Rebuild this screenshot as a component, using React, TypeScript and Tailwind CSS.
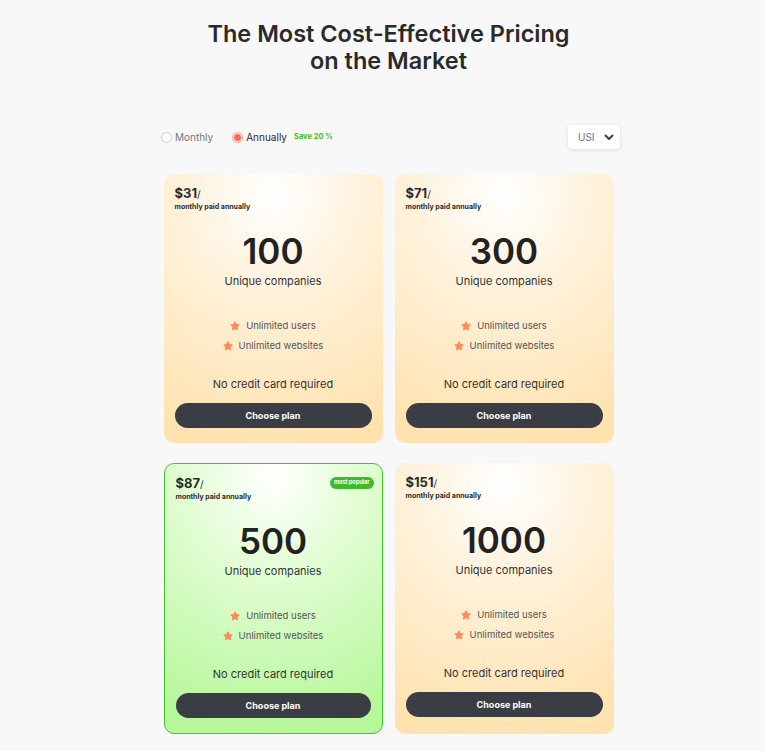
import React from "react";

const Star = () => (
  <svg width="10" height="10" viewBox="0 0 24 24" className="shrink-0">
    <path
      d="M12 2.5l2.9 6.1 6.6.8-4.9 4.6 1.3 6.6L12 17.3l-5.9 3.3 1.3-6.6-4.9-4.6 6.6-.8z"
      fill="#ff8a5b"
      stroke="#ff8a5b"
      strokeWidth="3"
      strokeLinejoin="round"
    />
  </svg>
);

type Plan = { price: string; count: string; popular?: boolean };

const plans: Plan[] = [
  { price: "$31", count: "100" },
  { price: "$71", count: "300" },
  { price: "$87", count: "500", popular: true },
  { price: "$151", count: "1000" },
];

function Card({ p }: { p: Plan }) {
  const bg = p.popular
    ? "bg-[radial-gradient(ellipse_110%_95%_at_50%_5%,#ffffff_0%,#e4fdd6_35%,#b6f79a_100%)] border border-[#45c232]"
    : "bg-[radial-gradient(ellipse_110%_95%_at_50%_8%,#ffffff_0%,#fff1da_40%,#ffe2ae_100%)]";
  return (
    <div className={`relative rounded-[10px] ${bg} flex flex-col px-[11px] pt-[13px] pb-[15px]`}>
      {p.popular && (
        <div className="absolute right-[8px] top-[13px] rounded-full bg-[#3dbb2b] px-[4px] h-[12px] flex items-center text-[5.5px] font-bold text-white leading-none">
          most popular
        </div>
      )}
      <div className="flex items-baseline leading-none">
        <span className="text-[13px] font-bold text-[#2b2b2b]">{p.price}</span>
        <span className="text-[10px] text-[#2b2b2b]">/</span>
      </div>
      <div className="mt-[3px] text-[7px] font-bold text-[#2b2b2b] leading-none">monthly paid annually</div>
      <div className="mt-[24px] text-center text-[35px] font-semibold text-[#222] leading-none">{p.count}</div>
      <div className="mt-[7px] text-center text-[11px] text-[#333] leading-none">Unique companies</div>
      <div className="mt-[34px] flex flex-col items-center gap-[10px] text-[9.5px] text-[#555] leading-none">
        <div className="flex items-center gap-[6px]">
          <Star />
          <span>Unlimited users</span>
        </div>
        <div className="flex items-center gap-[6px]">
          <Star />
          <span>Unlimited websites</span>
        </div>
      </div>
      <div className="mt-[28px] text-center text-[11px] text-[#333] leading-none">No credit card required</div>
      <button className="mt-[13px] h-[25px] shrink-0 w-full rounded-full bg-[#3b3d45] text-white text-[9px] font-bold">
        Choose plan
      </button>
    </div>
  );
}

export default function App() {
  return (
    <div className="min-h-[751px] bg-[#f8f8f8] font-['Inter',sans-serif] flex flex-col items-center pl-[12px]">
      <h1 className="mt-[20px] text-center text-[23.5px] font-semibold leading-[27px] text-[#2a2a2a]">
        The Most Cost-Effective Pricing
        <br />
        on the Market
      </h1>
      <div className="mt-[51px] w-[459px] ml-[4px] flex items-center justify-between">
        <div className="flex items-center text-[10px]">
          <span className="w-[11px] h-[11px] rounded-full border border-[#cfcfcf] bg-white" />
          <span className="ml-[3px] text-[#777]">Monthly</span>
          <span className="ml-[19px] w-[11px] h-[11px] rounded-full border border-[#f4a08a] bg-white flex items-center justify-center">
            <span className="w-[7px] h-[7px] rounded-full bg-[#f76b56]" />
          </span>
          <span className="ml-[3px] text-[#2b2b2b]">Annually</span>
          <span className="ml-[7px] text-[7.5px] font-bold text-[#4cbb17]">Save 20 %</span>
        </div>
        <div className="w-[52px] h-[24px] rounded-[4px] bg-white shadow-[0_1px_4px_rgba(0,0,0,0.12)] flex items-center pl-[10px] pr-[5px] justify-between">
          <span className="text-[10px] text-[#6b7280]">USI</span>
          <svg width="12" height="12" viewBox="0 0 24 24" fill="none" stroke="#444" strokeWidth="4" strokeLinecap="round" strokeLinejoin="round">
            <path d="M5 9l7 7 7-7" />
          </svg>
        </div>
      </div>
      <div className="mt-[25px] w-[450px] grid grid-cols-2 gap-x-[12px] gap-y-[20px]">
        {plans.map((p) => (
          <Card key={p.count} p={p} />
        ))}
      </div>
    </div>
  );
}
